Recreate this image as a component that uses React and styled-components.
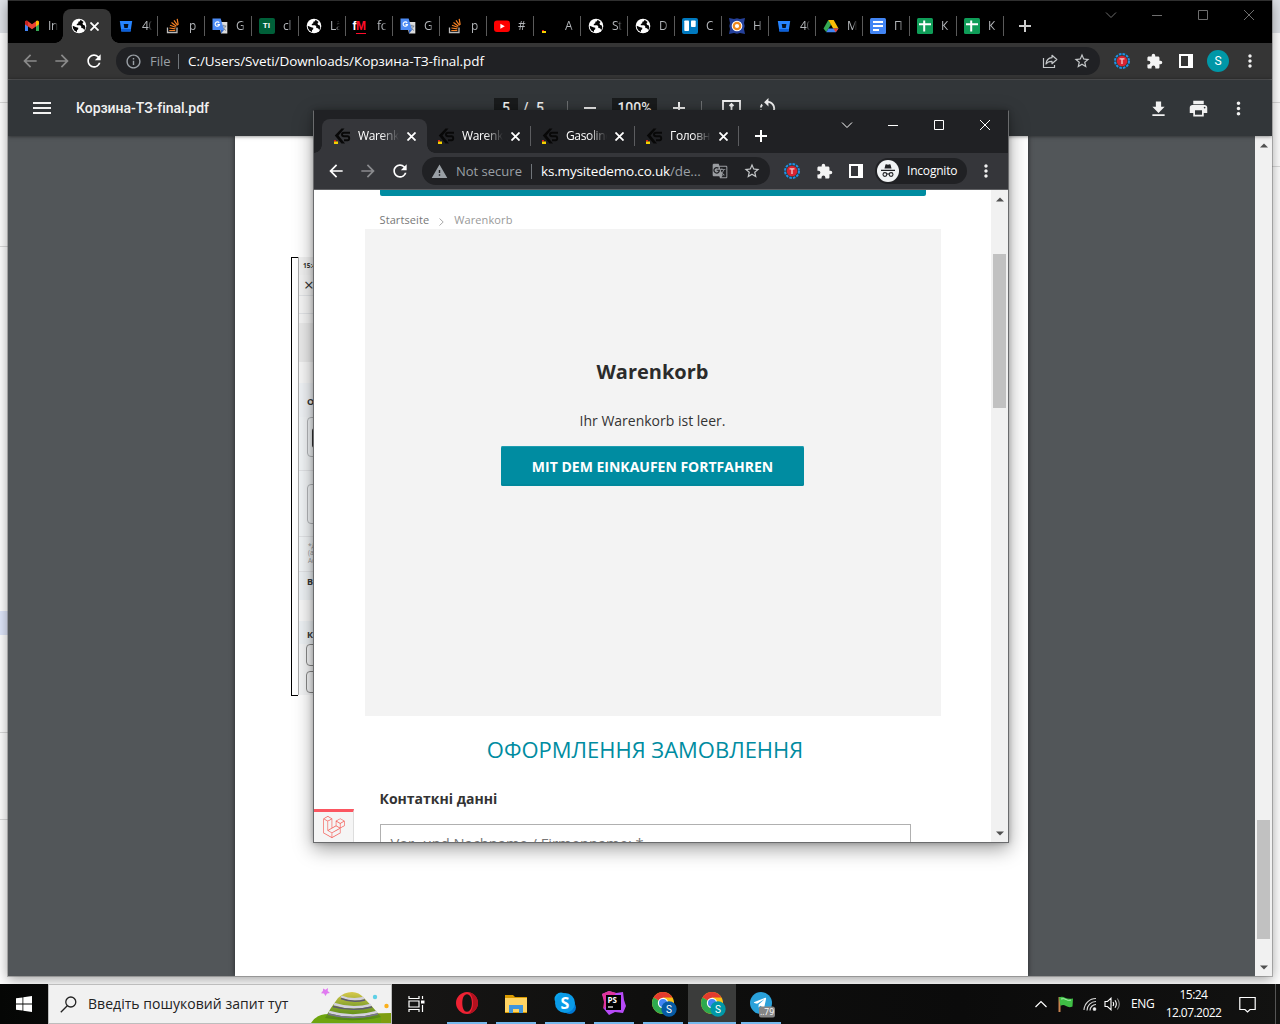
import React from "react";
import styled, { createGlobalStyle, css } from "styled-components";
import {
  MdArrowBack, MdArrowForward, MdRefresh, MdStarBorder, MdMoreVert, MdMenu,
  MdPrint, MdInfoOutline, MdWarning, MdGTranslate, MdRotateLeft,
} from "react-icons/md";
import { FaLaravel, FaTelegramPlane } from "react-icons/fa";

const ui = `"Open Sans", "Noto Sans", sans-serif`;
const roboto = `Roboto, "Noto Sans", sans-serif`;

const Global = createGlobalStyle`
  *, *::before, *::after { box-sizing: border-box; }
  html, body { margin: 0; padding: 0; overflow: hidden; }
  body { font-family: ${ui}; width: 1280px; height: 1024px; }
  svg { display: block; flex: none; }
`;

/* ---------- desktop ---------- */
const Desktop = styled.div`
  width: 1280px; height: 1024px; display: flex; flex-direction: column; overflow: hidden; background: #fff;
`;
const Workspace = styled.div`
  position: relative; height: 984px; flex: none; overflow: hidden; background: #fdfdfd;
`;
const Backdrop = styled.div`
  height: 100%; display: flex; justify-content: space-between;
`;
const Strip = styled.div`
  width: 8px; display: flex; flex-direction: column;
`;
const Band = styled.div`
  height: ${(p) => p.$h}px; background: ${(p) => p.$bg || "#fefefe"}; flex: none;
  border-bottom: ${(p) => (p.$line ? "1px solid #dadada" : "0")};
`;

/* ---------- windows ---------- */
const Win = styled.section`
  position: absolute; left: ${(p) => p.$x}px; top: ${(p) => p.$y}px;
  width: ${(p) => p.$w}px; height: ${(p) => p.$h}px;
  display: flex; flex-direction: column; overflow: hidden; isolation: isolate;
`;
const MainWin = styled(Win)`
  border-top: 1px solid #2f2f2f;
  box-shadow: 0 0 0 1px rgba(90,90,90,.4), 0 3px 12px rgba(0,0,0,.38);
`;
const SmallWin = styled(Win)`
  border: 1px solid #6a6b6d; border-top-color: #202124;
  box-shadow: 0 6px 18px rgba(0,0,0,.38), 0 0 5px rgba(0,0,0,.25);
`;
const TabStrip = styled.div`
  height: ${(p) => p.$h}px; flex: none; display: flex; align-items: flex-end;
  background: ${(p) => p.$bg}; padding-left: 8px;
`;
const Tab = styled.div`
  position: relative; width: ${(p) => p.$w}px; height: 34px; flex: none;
  display: flex; align-items: center; padding-left: ${(p) => p.$pl ?? 8}px;
  border-radius: 8px 8px 0 0;
  background: ${(p) => p.$active || "transparent"};
  ${(p) => p.$active && css`
    &::before, &::after {
      content: ""; position: absolute; bottom: 0; width: 8px; height: 8px;
    }
    &::before { left: -8px; background: radial-gradient(circle at 0 0, transparent 7.5px, ${p.$active} 8px); }
    &::after { right: -8px; background: radial-gradient(circle at 100% 0, transparent 7.5px, ${p.$active} 8px); }
  `}
`;
const Sep = styled.i`
  width: 1px; height: 20px; background: ${(p) => p.$c || "#4c4c4c"}; margin-left: auto; flex: none;
`;
const TabText = styled.span`
  width: ${(p) => p.$w}px; margin-left: ${(p) => p.$ml ?? 8}px; overflow: hidden; white-space: nowrap;
  font: 400 12px/16px ${ui}; letter-spacing: -.35px; color: ${(p) => p.$c || "#b4b7bb"};
  -webkit-mask-image: linear-gradient(90deg, #000 55%, transparent 100%);
`;
const CloseBox = styled.span`
  display: flex; margin-left: ${(p) => p.$ml || 0}px;
`;
const NewTab = styled.span`
  display: flex; height: 34px; align-items: center; padding-left: ${(p) => p.$pl}px;
`;
const Controls = styled.div`
  margin-left: auto; display: flex; align-self: flex-start; height: 28px;
  color: ${(p) => p.$c};
`;
const Ctl = styled.span`
  width: 46px; display: flex; align-items: center; justify-content: center;
`;
const Toolbar = styled.div`
  height: 37px; flex: none; display: flex; align-items: center; background: ${(p) => p.$bg};
  border-bottom: 1px solid ${(p) => p.$line}; color: #f1f1f1; padding-left: 6px;
`;
const ToolIcon = styled.span`
  width: 32px; display: flex; justify-content: center; align-items: center; flex: none;
  color: ${(p) => p.$c || "inherit"};
`;
const Omnibox = styled.div`
  width: ${(p) => p.$w}px; height: 28px; border-radius: 14px; background: #202124;
  margin: 0 6px; flex: none; display: flex; align-items: center; padding: 0 9px 0 9px;
  font: 400 13px/20px ${ui}; color: #9aa0a6; white-space: nowrap;
`;
const Scheme = styled.span`
  margin-left: 8px; width: ${(p) => p.$w}px;
`;
const Rule = styled.i`
  width: 1px; height: 15px; background: #70757a; margin: 0 9px 0 0;
`;
const Url = styled.span`
  color: #fff; font-size: 13.5px; letter-spacing: ${(p) => p.$ls}px;
  em { font-style: normal; color: #9aa0a6; }
`;
const OmniEnd = styled.span`
  margin-left: auto; display: flex; align-items: center; gap: ${(p) => p.$gap}px; color: #c4c7c9;
`;
const Avatar = styled.span`
  width: 22px; height: 22px; border-radius: 50%; background: #0097a7; color: #fff;
  font: 400 12px/22px ${roboto}; text-align: center;
`;
const Incog = styled.span`
  width: 92px; height: 26px; border-radius: 13px; background: #202124; margin: 0 3px 0 1px; display: flex; align-items: center;
  padding-left: 2px; font: 400 12px/16px ${ui}; letter-spacing: -.2px; color: #fff; gap: 8px; flex: none;
`;

/* ---------- pdf viewer ---------- */
const PdfBar = styled.div`
  height: 56px; flex: none; background: #323639; display: flex; align-items: center; color: #f1f1f1;
  box-shadow: 0 0 4px rgba(0,0,0,.6); z-index: 1; padding: 0 23.5px 0 22px;
  font: 500 14px/20px ${roboto};
`;
const PdfTitle = styled.span`margin-left: 22px; width: 396px; letter-spacing: -0.05px;`;
const PdfField = styled.span`
  background: #191b1c; height: 20px; width: ${(p) => p.$w}px; text-align: center; flex: none;
`;
const PdfTools = styled.div`display: flex; align-items: center; width: 290px; margin-left: 22px;`;
const PdfText = styled.span`margin-left: 5px; width: 40px; word-spacing: 4px;`;
const PdfRule = styled.i`width: 1px; height: 14px; background: #6d7072;`;
const Gap = styled.i`width: ${(p) => p.$w}px; flex: none;`;
const PdfActions = styled.div`margin-left: auto; display: flex; gap: 19px;`;
const PdfBody = styled.div`flex: 1; display: flex; background: #525659; min-height: 0;`;
const PdfCanvas = styled.div`flex: 1; padding-left: 227px;`;
const Paper = styled.div`
  width: 793px; height: 840px; background: #fff; box-shadow: 0 0 5px rgba(0,0,0,.55);
  padding: 121px 0 0 56px; display: flex;
`;
const Bracket = styled.div`
  width: 7px; height: 439px; border: 1px solid #000; border-right: 0; flex: none;
`;
const Mock = styled.div`
  width: 60px; height: 438px; border-left: 1px solid #aaa; overflow: hidden;
  display: flex; flex-direction: column; color: #333;
`;
const MockPart = styled.div`
  height: ${(p) => p.$h}px; background: ${(p) => p.$bg || "#f6f7f9"}; flex: none; padding: ${(p) => p.$pad || "0 0 0 8px"};
  border-bottom: ${(p) => (p.$line ? "1px solid #e2e4e7" : "0")};
  font-family: ${ui}; font-size: ${(p) => p.$fs || 8}px; line-height: 1.15; color: ${(p) => p.$c || "#333"}; font-weight: ${(p) => p.$fw || 700};
  white-space: nowrap;
`;
const MockBox = styled.div`
  height: ${(p) => p.$h}px; border: 1px solid ${(p) => p.$c || "#b5b8bb"}; border-radius: 4px; width: 60px;
  padding: 10px 0 0 4px;
`;
const Phone = styled.div`height: 20px; width: 20px; background: #333; border-radius: 3px;`;

/* ---------- scroll bars ---------- */
const Scroll = styled.div`
  width: 17px; flex: none; background: #f1f1f1; display: flex; flex-direction: column; align-items: center;
  padding: 7px 0 6px;
`;
const Thumb = styled.div`
  width: 13px; height: ${(p) => p.$h}px; background: #c1c1c1; margin-bottom: auto; margin-top: ${(p) => p.$mt}px;
`;

/* ---------- shop page ---------- */
const PageArea = styled.div`flex: 1; display: flex; background: #fff; min-height: 0;`;
const Page = styled.div`flex: 1; position: relative; overflow: hidden; padding-left: 51px; display: flex; flex-direction: column;`;
const TopBar = styled.div`height: 6px; width: 546px; margin-left: 15px; background: #008ca1; border-radius: 0 0 2px 2px; flex: none;`;
const Crumbs = styled.div`
  height: 33px; padding: 14px 0 0 14.5px; display: flex; align-items: center; gap: 10px; flex: none;
  font: 400 11px/16px "Open Sans", sans-serif; letter-spacing: .1px; color: #777;
  span:last-child { color: #999; }
  svg { margin-top: 5px; }
`;
const CartPanel = styled.div`
  width: 576px; height: 487px; background: #f3f3f3; flex: none; padding: 129px 1px 0 0;
  display: flex; flex-direction: column; align-items: center;
  font: 400 14px/20px "Open Sans", sans-serif; color: #333;
  h1 { margin: 0; font: 700 20px/28px "Open Sans", sans-serif; color: #2b2b2b; }
  p { margin: 25px 0 15px; }
`;
const ShopButton = styled.button`
  width: 303px; height: 40px; border: 0; border-radius: 2px; background: #008ca1; color: #fff; padding: 1px 0 0 1px;
  margin-right: 1px;
  box-shadow: inset 0 1px 0 #1f9db0, inset 0 -2px 0 #00879b; font: 700 14px/20px "Open Sans", sans-serif;
`;
const SectionTitle = styled.h2`
  margin: 17px 0 0; width: 560px; text-align: center; font: 400 22px/32px "Open Sans", sans-serif; color: #008ca1; flex: none;
`;
const FieldLabel = styled.label`margin: 24px 0 15px 14.5px; font: 700 14px/20px "Open Sans", sans-serif; color: #333; flex: none;`;
const Field = styled.div`
  width: 531px; height: 40px; border: 1px solid #b0b0b0; margin-left: 15px; padding: 8px 9.5px; flex: none;
  font: 400 14.7px/20px "Open Sans", sans-serif; color: #777;
`;
const DebugBadge = styled.div`
  position: absolute; left: 0; bottom: 0; width: 40px; height: 33px; border-top: 3px solid #fb5661; background: #f5f5f5;
  border-right: 1px solid #ddd; display: flex; align-items: center; justify-content: center; color: #f4645f;
`;

/* ---------- taskbar ---------- */
const Taskbar = styled.footer`
  height: 40px; flex: none; background: linear-gradient(90deg, #050605, #171615 30%, #0f0f0e 50%, #0b0b0b 75%, #121211); display: flex; color: #fff;
`;
const Start = styled.div`width: 48px; display: flex; align-items: center; justify-content: center;`;
const Search = styled.div`
  width: 344px; border: 1px solid #bdbdbd; background: #f1f1f1; display: flex; align-items: center; padding-left: 11px; color: #222;
  font: 400 14px/20px ${ui}; white-space: nowrap; overflow: hidden;
  span { margin-left: 11px; width: 213px; letter-spacing: .04px; }
`;
const TaskView = styled.div`width: 48px; display: flex; align-items: center; justify-content: center;`;
const TaskApp = styled.div`
  width: ${(p) => p.$w || 49}px; display: flex; flex-direction: column; align-items: center; padding-top: 6px;
  background: ${(p) => (p.$on ? "#3b3c3b" : "transparent")};
  justify-content: space-between;
`;
const Underline = styled.i`width: ${(p) => p.$w || 40}px; height: 2px; background: #76b9ed;`;
const Tray = styled.div`margin-left: auto; display: flex; align-items: center; font: 400 12px/18px ${ui};`;
const Lang = styled.span`width: 32px; margin-left: 10px; letter-spacing: -.3px;`;
const Clock = styled.span`width: 61px; text-align: center; margin-right: 15px; letter-spacing: -.55px; white-space: nowrap;`;
const ShowDesktop = styled.i`width: 5px; height: 40px; border-left: 1px solid #555; margin-left: 19px;`;

/* ---------- small drawings ---------- */
const Cross = ({ s = 8, w = 1.6, c = "#fff" }) => (
  <svg width={s} height={s} viewBox="0 0 8 8" stroke={c} strokeWidth={w} fill="none"><path d="M.4 .4L7.6 7.6M7.6 .4L.4 7.6" /></svg>
);
const Plus = ({ c = "#fff", s = 12 }) => (
  <svg width={s} height={s} viewBox="0 0 12 12" stroke={c} strokeWidth="2"><path d="M6 0V12M0 6H12" /></svg>
);
const Arrow = ({ down }) => (
  <svg width="8" height="5" viewBox="0 0 8 5"><path d={down ? "M0 .5H8L4 4.5Z" : "M0 4.5H8L4 .5Z"} fill="#505050" /></svg>
);
const WinControls = ({ color }) => (
  <Controls $c={color}>
    <Ctl><svg width="12" height="8" viewBox="0 0 12 8" fill="none" stroke="currentColor"><path d="M1 1.5L6 6.5L11 1.5" /></svg></Ctl>
    <Ctl><svg width="10" height="10" viewBox="0 0 10 10"><path d="M0 5h10v1H0z" fill="currentColor" /></svg></Ctl>
    <Ctl><svg width="10" height="10" viewBox="0 0 10 10" fill="none" stroke="currentColor"><path d="M.5 .5h9v9h-9z" /></svg></Ctl>
    <Ctl><svg width="10" height="10" viewBox="0 0 10 10" fill="none" stroke="currentColor"><path d="M0 0L10 10M10 0L0 10" /></svg></Ctl>
  </Controls>
);
const Pic = ({ children, s = 16, v = 16 }) => <svg width={s} height={s} viewBox={`0 0 ${v} ${v}`}>{children}</svg>;

const Globe = () => (
  <Pic><circle cx="8" cy="8" r="7.300" fill="#fff" /><path d="M9.500 1.800L9 3.300 7.300 3.800V5.300L5.800 6V7.200H9.200L10.300 8.500V10L12 10.300 13.300 12 14.300 10 13.800 7.500 12 6.800 11.500 5.300 12.600 4z" fill="#050505" /><path d="M1.700 7.800L5.300 9.300 7.300 9.700 7.200 11.300 6 12.200V14L3.600 12.700 2 10.300z" fill="#050505" /></Pic>
);
const icons = {
  gmail: <Pic><path d="M1 4.5V13h3V6.7z" fill="#4285f4" /><path d="M12 6.7V13h3V4.5z" fill="#34a853" /><path d="M1 6.3V4.4C1 2.8 2.7 2.3 3.9 3.2L8 6.3l4.1-3.1C13.3 2.3 15 2.8 15 4.4V6.3L8 11.3z" fill="#ea4335" /><path d="M12 3.3C13.4 2.3 15 2.9 15 4.4V6.3L12 8.5z" fill="#fbbc04" /><path d="M1 4.4C1 2.9 2.6 2.3 4 3.3V8.5L1 6.3z" fill="#c5221f" /></Pic>,
  bb: <Pic><path d="M1.800 3h12.400L12.600 13.500H3.400z" fill="#2684ff" /><path d="M5.700 6h4.700L9.700 10H6.400z" fill="#04101f" /><path d="M3.200 11h9.800l-.4 2.500H3.400z" fill="#0c5fd8" /></Pic>,
  so: <Pic><path d="M2.500 9.500v5h9.500v-5" fill="none" stroke="#bcbbbb" strokeWidth="1.300" /><path d="M4.300 12.500h6M4.400 10l6 .8M5 7.300l5.700 2M6.500 4.600l4.900 3.700M9 2.300l3.600 5M12.200 .8l1 6" fill="none" stroke="#f48024" strokeWidth="1.200" /></Pic>,
  tr: <Pic><path d="M6.500 4h8.800v11.500H9z" fill="#dcdcdc" /><path d="M9.300 8h5M11.800 6.800V8M13.500 8c-.5 2-1.800 3.400-3.400 4.300M10.600 9c.8 1.800 2 2.800 3.400 3.400" fill="none" stroke="#6f7f90" strokeWidth=".9" /><path d="M.5 0.500h8.200L12 12H.5z" fill="#4c8bf5" /><path d="M9 12h3l-3 3.500z" fill="#3267c9" /><path d="M7.200 4.900A2.200 2.200 0 1 0 7.500 6.600H5.500" fill="none" stroke="#fff" strokeWidth="1.100" /></Pic>,
  yt: <Pic><rect x="0" y="2.500" width="16" height="11.500" rx="3" fill="#f00" /><path d="M6.400 5.700v5l4.400-2.500z" fill="#fff" /></Pic>,
  trello: <Pic><rect width="16" height="16" rx="2" fill="#0079bf" /><rect x="2.300" y="2.500" width="4.700" height="10.500" rx=".8" fill="#fff" /><rect x="9" y="2.500" width="4.700" height="6.500" rx=".8" fill="#fff" /></Pic>,
  hex: <Pic><path d="M0 0L5 1 8 .3 11 1l5-1-1 5 .7 3L15 11l1 5-5-1-3 .7L5 15l-5 1 1-5L.3 8 1 5z" fill="#25419b" /><circle cx="8" cy="8" r="5.300" fill="#fff" /><circle cx="8" cy="8" r="4.300" fill="#f18a1c" /><circle cx="8" cy="8" r="2.100" fill="#fff" /></Pic>,
  drive: <Pic><path d="M5.300 2h5.400L8 6.700z" fill="#188038" /><path d="M5.300 2L.5 10.500 3.200 14 8 6.700z" fill="#34a853" /><path d="M10.700 2L15.500 10.500H10.200L5.300 2z" fill="#fbbc04" /><path d="M5.500 10.500h10l-2.700 3.800H3.200z" fill="#4285f4" /><path d="M15.500 10.500l-2.700 3.800-2.600-3.800z" fill="#ea4335" /></Pic>,
  docs: <Pic><rect width="16" height="16" rx="1.500" fill="#4285f4" /><path d="M3 4h10M3 8h10M3 12h6" stroke="#fff" strokeWidth="1.800" /></Pic>,
  sheets: <Pic><rect width="16" height="16" rx="1.500" fill="#0f9d58" /><path d="M2 6.300h12M7.200 2.500v11" stroke="#fff" strokeWidth="2" /></Pic>,
  ksMini: <Pic><path d="M1 12h2v2H1z" fill="#e20c0c" /><path d="M1 13h4v2H1z" fill="#f5d100" /></Pic>,
  ks: <Pic s={18} v={18}><path d="M11.500 1.500L8.500 1.500 1.800 8.500 8.500 16.500H12L5.500 8.500z" fill="#080808" /><path d="M17 5.800H11Q9 5.800 9 7.500T11 9.300H14.500Q16.200 9.300 16.200 11.300T14.500 13.300H11" fill="none" stroke="#080808" strokeWidth="1.900" /><path d="M1 13h2v1.500H1z" fill="#e2121a" /><path d="M1 14.500h4V17H1z" fill="#f5d100" /></Pic>,
};
const TiIcon = styled.span`
  width: 16px; height: 16px; border-radius: 2px; background: #006039; color: #fff; font: 700 8px/16px ${roboto}; text-align: center; flex: none;
`;
const FmIcon = styled.span`
  width: 16px; height: 17px; color: #fff; font: 700 12px/17px "Liberation Sans", sans-serif; letter-spacing: -.5px; flex: none; white-space: nowrap;
  b { color: #ff0d2b; border-bottom: 1px solid #ff0d2b; }
`;
const FavBox = styled.span`width: 17px; height: 17px; display: flex; align-items: center; justify-content: center; flex: none;`;

const mainTabs = [
  ["gmail", "Inb"], ["globe", null], ["bb", "40"], ["so", "p"], ["tr", "G"], ["ti", "cl"], ["globe", "Lä"], ["fm", "fc"], ["tr", "G"],
  ["so", "p"], ["yt", "#"], ["ksMini", "A"], ["globe", "St"], ["globe", "D"], ["trello", "C"], ["hex", "H"], ["bb", "40"],
  ["drive", "M"], ["docs", "П"], ["sheets", "К"], ["sheets", "К"],
];
const Fav = ({ name }) => {
  if (name === "globe") return <Globe />;
  if (name === "ti") return <TiIcon>TI</TiIcon>;
  if (name === "fm") return <FmIcon>f<b>M</b></FmIcon>;
  return icons[name];
};

const TExt = () => (
  <Pic>
    <circle cx="8" cy="8" r="7" fill="none" stroke="#1b93e8" strokeWidth="2" strokeDasharray="2.600 1.100" />
    <circle cx="8" cy="8" r="5.300" fill="#d92332" /><path d="M5.500 5.800h5M8 5.800V11" stroke="#f3c9cc" strokeWidth="1.300" />
  </Pic>
);
const Puzzle = () => (
  <svg width="17" height="17" viewBox="0 0 24 24" fill="#f4f4f4"><path d="M20.500 11H19V7c0-1.100-.9-2-2-2h-4V3.500a2.500 2.500 0 0 0-5 0V5H4c-1.100 0-2 .9-2 2v3.800h1.500a2.700 2.700 0 0 1 0 5.400H2V20c0 1.100.9 2 2 2h3.800v-1.500a2.700 2.700 0 0 1 5.400 0V22H17c1.100 0 2-.9 2-2v-4h1.500a2.500 2.500 0 0 0 0-5z" /></svg>
);
const SidePanel = () => (
  <Pic s={14} v={14}><path d="M0 0h14v14H0zM2 2v10h7V2z" fill="#fff" fillRule="evenodd" /></Pic>
);
const Share = () => (
  <Pic><g fill="none" stroke="currentColor" strokeWidth="1.200"><path d="M1.500 5v9.500h11V12" /><path d="M10 2.300L14.800 6.500 10 10.700V8.300C7 8.200 5.300 9.200 4 11 4.300 7.500 6.300 5 10 4.700z" strokeLinejoin="round" /></g></Pic>
);
const IncogIcon = () => (
  <svg width="22" height="22" viewBox="0 0 22 22"><circle cx="11" cy="11" r="11" fill="#f1f3f4" /><path d="M7.500 8.500L8.500 4.500Q9 4 11 4.700 13 4 13.500 4.500L14.500 8.500zM4 9.700h14v1.200H4z" fill="#202124" /><g fill="none" stroke="#202124" strokeWidth="1.100"><circle cx="7.900" cy="14.500" r="1.900" /><circle cx="14.100" cy="14.500" r="1.900" /><path d="M9.800 14.200q1.200-.8 2.400 0" /></g></svg>
);

const PageMock = () => (
  <Mock>
    <MockPart $h={18} $bg="#f2f2f2" $fs={6.5} $pad="5px 0 0 4px">15:47</MockPart>
    <MockPart $h={21} $bg="#f4f4f4" $fs={17} $fw={400} $pad="0 0 0 5px" $line>×</MockPart>
    <MockPart $h={18} $bg="#f6f6f6" $line />
    <MockPart $h={9} $bg="#f6f6f6" />
    <MockPart $h={39} $bg="#ebebeb" />
    <MockPart $h={21} $bg="#f8f8f8" />
    <MockPart $h={34} $bg="#f1f4f7" $fs={9} $pad="14px 0 0 8px">Оплата</MockPart>
    <MockPart $h={54} $bg="#f3f6f8" $line><MockBox $h={40}><Phone /></MockBox></MockPart>
    <MockPart $h={66} $bg="#f3f6f8" $pad="13px 0 0 8px" $line><MockBox $h={40} /></MockPart>
    <MockPart $h={35} $bg="#f3f6f8" $fs={6.5} $fw={400} $c="#999" $pad="5px 0 0 9px" $line>*Дос<br />(ав<br />Ad</MockPart>
    <MockPart $h={28} $bg="#eff3f6" $fs={9} $pad="5px 0 0 8px">Всього</MockPart>
    <MockPart $h={21} $bg="#f9f9f9" />
    <MockPart $h={23} $bg="#eff3f6" $fs={9} $pad="9px 0 0 8px">Контакт</MockPart>
    <MockPart $h={27} $bg="#f5f6f7" $pad="0 0 0 7px"><MockBox $h={22} $c="#888" /></MockPart>
    <MockPart $h={26} $bg="#f5f6f7" $pad="0 0 0 7px"><MockBox $h={22} $c="#888" /></MockPart>
  </Mock>
);

const MainWindow = () => (
  <MainWin $x={8} $y={0} $w={1264} $h={976}>
    <TabStrip $h={42} $bg="#000">
      {mainTabs.map(([icon, text], i) => (
        <Tab key={i} $w={i === 1 ? 48 : 47} $pl={i === 1 ? 7 : i === 0 ? 7 : 6} $active={text ? null : "#353535"}>
          <FavBox><Fav name={icon} /></FavBox>
          {text ? <TabText $w={10} $ml={8}>{text}</TabText> : <CloseBox $ml={3}><Cross s={9} /></CloseBox>}
          {i > 1 && <Sep $c="#5a5a5a" />}
        </Tab>
      ))}
      <NewTab $pl={15}><Plus c="#ccc" /></NewTab>
      <WinControls color="#6e6e6e" />
    </TabStrip>
    <Toolbar $bg="#353535" $line="#5f6062">
      <ToolIcon $c="#8a8a8a"><MdArrowBack size={20} /></ToolIcon>
      <ToolIcon $c="#8a8a8a"><MdArrowForward size={20} /></ToolIcon>
      <ToolIcon $c="#fff"><MdRefresh size={20} /></ToolIcon>
      <Omnibox $w={984}>
        <MdInfoOutline size={17} />
        <Scheme $w={28}>File</Scheme><Rule />
        <Url $ls={-0.08}>C:/Users/Sveti/Downloads/Корзина-ТЗ-final.pdf</Url>
        <OmniEnd $gap={15}><Share /><MdStarBorder size={18} /></OmniEnd>
      </Omnibox>
      <ToolIcon><TExt /></ToolIcon>
      <ToolIcon><Puzzle /></ToolIcon>
      <ToolIcon><SidePanel /></ToolIcon>
      <ToolIcon><Avatar>S</Avatar></ToolIcon>
      <ToolIcon><MdMoreVert size={20} /></ToolIcon>
    </Toolbar>
    <PdfBar>
      <MdMenu size={24} />
      <PdfTitle>Корзина-ТЗ-final.pdf</PdfTitle>
      <PdfTools>
        <PdfField $w={24}>5</PdfField><PdfText>/ 5</PdfText>
        <Gap $w={4} /><PdfRule /><Gap $w={16} />
        <svg width="12" height="2"><path d="M0 1h12" stroke="#f1f1f1" strokeWidth="2" /></svg>
        <Gap $w={16} /><PdfField $w={45}>100%</PdfField><Gap $w={16} /><Plus c="#f1f1f1" />
        <Gap $w={16} /><PdfRule /><Gap $w={20} />
        <svg width="20" height="16" viewBox="0 0 20 16" fill="none" stroke="#f1f1f1" strokeWidth="1.800"><path d="M1 1h17v14H1zM9.500 4v8M7.500 6l2-2 2 2" /></svg>
        <Gap $w={14} />
        <MdRotateLeft size={23} />
      </PdfTools>
      <PdfActions>
        <svg width="21" height="21" viewBox="0 0 24 24" fill="#f1f1f1"><path d="M9 4h6v6h4l-7 7-7-7h4zM5 18.500h14v2H5z" /></svg>
        <MdPrint size={21} />
        <MdMoreVert size={21} />
      </PdfActions>
    </PdfBar>
    <PdfBody>
      <PdfCanvas><Paper><Bracket /><PageMock /></Paper></PdfCanvas>
      <Scroll><Arrow /><Thumb $h={119} $mt={672} /><Arrow down /></Scroll>
    </PdfBody>
  </MainWin>
);

const shopTabs = ["Warenkorb", "Warenkorb", "Gasoline", "Головна"];

const ShopWindow = () => (
  <SmallWin $x={313} $y={110} $w={696} $h={733}>
    <TabStrip $h={42} $bg="#202124">
      {shopTabs.map((text, i) => (
        <Tab key={i} $w={i === 0 ? 105 : 104} $active={i === 0 ? "#35363a" : null}>
          <Gap $w={i === 0 ? 3 : 2} />{icons.ks}
          <TabText $w={41} $ml={7} $c="#fff">{text}</TabText>
          <CloseBox $ml={7.5}><Cross s={9} /></CloseBox>
          {i > 0 && <Sep $c="#5c5d60" />}
        </Tab>
      ))}
      <NewTab $pl={16}><Plus /></NewTab>
      <WinControls color="#fff" />
    </TabStrip>
    <Toolbar $bg="#35363a" $line="#5f6063">
      <ToolIcon $c="#fff"><MdArrowBack size={20} /></ToolIcon>
      <ToolIcon $c="#8a8b8e"><MdArrowForward size={20} /></ToolIcon>
      <ToolIcon $c="#fff"><MdRefresh size={20} /></ToolIcon>
      <Omnibox $w={348}>
        <MdWarning size={17} />
        <Scheme $w={75}>Not secure</Scheme><Rule />
        <Url $ls={-0.16}>ks.mysitedemo.co.uk<em>/de...</em></Url>
        <OmniEnd $gap={15}><MdGTranslate size={16} color="#9a9da1" /><MdStarBorder size={18} /></OmniEnd>
      </Omnibox>
      <ToolIcon><TExt /></ToolIcon>
      <ToolIcon><Puzzle /></ToolIcon>
      <ToolIcon><SidePanel /></ToolIcon>
      <Gap $w={2} />
      <Incog><IncogIcon />Incognito</Incog>
      <ToolIcon><MdMoreVert size={20} /></ToolIcon>
    </Toolbar>
    <PageArea>
      <Page>
        <TopBar />
        <Crumbs>
          <span>Startseite</span>
          <svg width="5" height="8" viewBox="0 0 5 8" fill="none" stroke="#aaa"><path d="M.5 .5L4.200 4 .5 7.500" /></svg>
          <span>Warenkorb</span>
        </Crumbs>
        <CartPanel>
          <h1>Warenkorb</h1>
          <p>Ihr Warenkorb ist leer.</p>
          <ShopButton>MIT DEM EINKAUFEN FORTFAHREN</ShopButton>
        </CartPanel>
        <SectionTitle>ОФОРМЛЕННЯ ЗАМОВЛЕННЯ</SectionTitle>
        <FieldLabel>Контаткні данні</FieldLabel>
        <Field>Vor- und Nachname / Firmenname: *</Field>
        <DebugBadge><FaLaravel size={22} /></DebugBadge>
      </Page>
      <Scroll><Arrow /><Thumb $h={154} $mt={52} /><Arrow down /></Scroll>
    </PageArea>
  </SmallWin>
);

const Chrome = ({ badge }) => (
  <svg width="28" height="28" viewBox="-1.5 0 28 28">
    <circle cx="12.500" cy="13" r="11" fill="#fbc116" />
    <path d="M12.500 13L3 7.500A11 11 0 0 1 22 7.500H12.500z" fill="#e33b2e" />
    <path d="M12.500 13L3 7.500A11 11 0 0 0 12.500 24L17 15.500z" fill="#2da94f" />
    <circle cx="12.500" cy="13" r="5.200" fill="#fff" /><circle cx="12.500" cy="13" r="4" fill="#4285f4" />
    <circle cx="18.500" cy="19" r="7.700" fill={badge} />
    <text x="18.500" y="22.500" fill="#fff" fontFamily="Roboto, sans-serif" fontSize="10" textAnchor="middle">S</text>
  </svg>
);

const Hills = () => (
  <svg width="80" height="38" viewBox="0 0 80 38">
    <defs><linearGradient id="hill" x1="0" y1="0" x2="0" y2="1"><stop offset="0" stopColor="#d8c94c" /><stop offset=".5" stopColor="#86a32c" /><stop offset="1" stopColor="#4f8510" /></linearGradient></defs>
    <path d="M50 30Q60 28 80 28V38H50z" fill="#7f9e10" />
    <path d="M0 38Q6 28 20 29L70 32V38z" fill="#6ea50e" />
    <path d="M14 33Q20 22 27 13 33 7 41 7 48 7 53 13 62 22 70 32 45 38 14 33z" fill="url(#hill)" />
    <g fill="none" strokeWidth="2.400"><path d="M30 11.500Q41 16 53 13" stroke="#d3d0de" /><path d="M30 13.500Q41 18 54 15" stroke="#5d5a70" strokeWidth="1.400" /><path d="M23 19Q41 25 60 20" stroke="#d3d0de" /><path d="M22 21.500Q42 27 61 22" stroke="#5d5a70" strokeWidth="1.400" /><path d="M18 27Q42 34 66 27" stroke="#d3d0de" /><path d="M17 29Q42 36 67 29" stroke="#77748a" strokeWidth="1.400" /></g>
    <path d="M12 3.500l2.500 1.300L17 3l-.3 3 2.300 2-3 .6-1.500 2.400-1.500-2.400-3-.4 2-2.400z" fill="#e07bf0" />
    <circle cx="64" cy="12" r="2.200" fill="#5fd0e6" /><circle cx="75.500" cy="21" r="2.200" fill="#fbb01c" />
  </svg>
);

const TaskbarView = () => (
  <Taskbar>
    <Start><svg width="16" height="16" viewBox="0 0 16 16" fill="#fff"><path d="M0 2.300L6.500 1.400V7.600H0zM7.300 1.300L16 0V7.600H7.300zM0 8.400H6.500V14.600L0 13.700zM7.300 8.400H16V16L7.300 14.700z" /></svg></Start>
    <Search>
      <svg width="17" height="17" viewBox="0 0 17 17" fill="none" stroke="#222" strokeWidth="1.300"><circle cx="10.800" cy="6" r="5" /><path d="M7.300 9.700L.8 16.200" /></svg>
      <span>Введіть пошуковий запит тут</span>
      <Gap $w={11} /><Hills />
    </Search>
    <TaskView><svg width="17" height="16" viewBox="0 0 17 16" fill="none" stroke="#fff" strokeWidth="1.200"><path d="M1 0v2.500h10V0M1 16v-2.500h10V16M1 5h10v6H1zM14.500 0v3M14.500 9v7" /><path d="M13 4.500h3.500v3H13z" fill="#fff" stroke="none" /></svg></TaskView>
    <Gap $w={3} />
    <TaskApp $w={48}><svg width="26" height="26" viewBox="0 0 26 26"><path d="M13 2C19 2 24 7 24 13s-5 11-11 11S2 19 2 13 7 2 13 2zm0 2.300c-3 0-4.700 3.700-4.700 8.700s1.700 8.800 4.700 8.800 4.900-3.800 4.900-8.800-1.900-8.700-4.900-8.700z" fill="#ee2233" fillRule="evenodd" /><path d="M15 2.300C20.500 3.300 24 7.700 24 13s-4 10-9 10.800c2.500-2.300 4-6 4-10.800S17.500 4.500 15 2.300z" fill="#b3111f" /></svg><Underline /></TaskApp>
    <TaskApp><svg width="26" height="26" viewBox="0 0 26 26"><path d="M2 5h8l2 2h12v16H2z" fill="#d99a00" /><path d="M2 8h22v14H2z" fill="#ffd463" /><path d="M6 23v-8h14v8h-4v-4h-6v4z" fill="#3f95dc" /></svg><Underline /></TaskApp>
    <TaskApp><svg width="26" height="26" viewBox="0 0 26 26"><circle cx="9" cy="9" r="6.500" fill="#0aa5ee" /><circle cx="17.500" cy="17.500" r="6.500" fill="#0078d4" /><circle cx="13" cy="13" r="10" fill="#0a9be8" /><text x="13" y="19" fill="#fff" fontFamily="Open Sans, sans-serif" fontWeight="700" fontSize="16" textAnchor="middle">S</text></svg><Underline /></TaskApp>
    <TaskApp><svg width="26" height="26" viewBox="0 0 26 26"><path d="M1 4L8 1l7 2 7-1 1 8 2 6-3 7-8-1-6 3-5-6 1-7z" fill="#b74af7" /><path d="M1 4L8 1l7 2-8 12-5 4 1-7z" fill="#e0359c" /><rect x="5" y="5" width="15" height="15" fill="#000" /><text x="6.500" y="13" fill="#fff" fontFamily="Open Sans, sans-serif" fontWeight="700" fontSize="8">PS</text><path d="M7 17h5" stroke="#fff" strokeWidth="1.200" /></svg><Underline /></TaskApp>
    <TaskApp><Chrome badge="#075ba5" /><Underline /></TaskApp>
    <Gap $w={1} />
    <TaskApp $on $w={48}><Chrome badge="#0097a7" /><Underline $w={48} /></TaskApp>
    <TaskApp $w={50}><svg width="28" height="28" viewBox="0 0 28 28"><circle cx="14" cy="13" r="11" fill="#2aa1da" /><FaTelegramPlane x="6" y="6" size={14} color="#fff" /><rect x="12" y="16.500" width="16" height="11" rx="2.500" fill="#858585" /><text x="20" y="25" fill="#fff" fontFamily="Open Sans, sans-serif" fontSize="8.500" textAnchor="middle">..79</text></svg><Underline /></TaskApp>
    <Tray>
      <svg width="12" height="8" viewBox="0 0 12 8" fill="none" stroke="#fff" strokeWidth="1.200"><path d="M.5 7L6 1.500 11.500 7" /></svg>
      <Gap $w={10} />
      <svg width="17" height="17" viewBox="0 0 17 17"><path d="M1.500 1h2v15h-2z" fill="#c9824f" /><path d="M2 1.500Q5 0 8 1.700T16 2.500L15.500 10.500Q12 12 9 10T3.500 10z" fill="#3fbf45" /><path d="M4 3q3-1 5 .5t5 .6" stroke="#a6efaa" fill="none" /></svg>
      <Gap $w={9} />
      <svg width="14" height="14" viewBox="0 0 14 14" fill="none" stroke="#ddd" strokeWidth="1.100"><path d="M1 13A12 12 0 0 1 13 1.500M4 13.500A9 9 0 0 1 13 4.500M7 13.500A6 6 0 0 1 13 7.500" /><circle cx="11.500" cy="12" r="1.300" fill="#fff" /></svg>
      <Gap $w={7} />
      <svg width="17" height="14" viewBox="0 0 17 14" fill="none" stroke="#fff" strokeWidth="1.100"><path d="M1 4.500h2.500L7 1.200v11.600L3.500 9.500H1zM9 5q1.300 2 0 4M11 3.200q2.700 3.800 0 7.600" /><path d="M13.300 1.500q4 5.500 0 11" stroke="#888" /></svg>
      <Lang>ENG</Lang>
      <Clock>15:24<br />12.07.2022</Clock>
      <svg width="17" height="17" viewBox="0 0 17 17" fill="none" stroke="#fff" strokeWidth="1.200"><path d="M.8 1.500h15.400v12H11L8.500 16 6 13.500H.8z" /></svg>
      <ShowDesktop />
    </Tray>
  </Taskbar>
);

export default function App() {
  return (
    <>
      <Global />
      <Desktop>
        <Workspace>
          <Backdrop>
            <Strip><Band $h={33} $bg="#dee1e6" /><Band $h={70} $line /><Band $h={144} $line /><Band $h={364} /><Band $h={24} $bg="#dfe6fa" /><Band $h={98} $line /><Band $h={87} $line /></Strip>
            <Strip><Band $h={33} $bg="#dee1e6" /><Band $h={70} $line /><Band $h={64} $line /></Strip>
          </Backdrop>
          <MainWindow />
          <ShopWindow />
        </Workspace>
        <TaskbarView />
      </Desktop>
    </>
  );
}
